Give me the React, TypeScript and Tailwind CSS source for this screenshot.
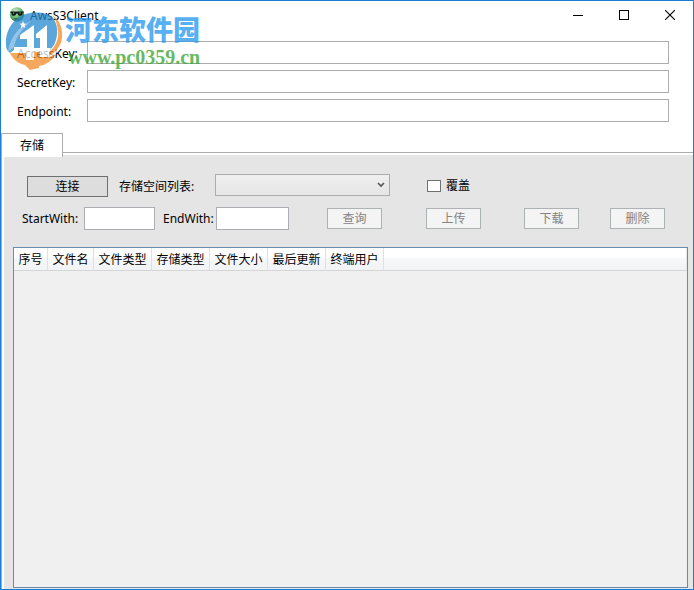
import React, { useState } from 'react';

const COLUMNS = [
  { title: '序号', width: 'w-[34px]' },
  { title: '文件名', width: 'w-[46px]' },
  { title: '文件类型', width: 'w-[58px]' },
  { title: '存储类型', width: 'w-[58px]' },
  { title: '文件大小', width: 'w-[58px]' },
  { title: '最后更新', width: 'w-[58px]' },
  { title: '终端用户', width: 'w-[58px]' },
];

const inputClass = 'h-[23px] min-w-0 border border-[#abadb3] bg-white px-1 outline-none';

const AppIcon: React.FC = () => (
  <svg width="16" height="16" viewBox="0 0 16 16" aria-hidden="true">
    <defs>
      <radialGradient id="face" cx="0.4" cy="0.3" r="0.75">
        <stop offset="0" stopColor="#d5f2d3" />
        <stop offset="0.5" stopColor="#71bd78" />
        <stop offset="1" stopColor="#1d6b38" />
      </radialGradient>
    </defs>
    <circle cx="8" cy="7.5" r="7.2" fill="url(#face)" />
    <path d="M1.500 4.500h13v1.200l-1 .5c0 1.800-1 2.600-2.400 2.600S9 8 8.500 6.400h-1C7 8 6 8.800 4.600 8.800S2.500 8 2.500 6.200l-1-.5z" fill="#101c16" />
    <path d="M4 6h1.200M10.500 6h1.200" stroke="#b8c8bd" strokeWidth="0.9" />
    <path d="M5.500 11.500c1.500.8 3.500.8 5-.3" stroke="#164c28" strokeWidth="0.9" fill="none" />
  </svg>
);

const SiteLogo: React.FC = () => (
  <svg width="60" height="60" viewBox="0 0 60 60" aria-hidden="true">
    <circle cx="29" cy="29" r="26" fill="#fff" />
    {/* sky */}
    <path d="M1 34C0 17 11 3 28 1.500C37 1 44 3 47 6C53 12 54 24 49 34L45 39H9L5 42C2 40 1 37 1 34z" fill="#2589ce" />
    <path d="M3 41C5 27 13 16 26 10C18 17 11 25 9 36z" fill="#fff" opacity="0.35" />
    <path d="M18 10l1 2.500 2.600.2-2 1.600.7 2.600-2.300-1.400-2.200 1.500.6-2.700-2-1.600 2.600-.2z" fill="#fff" />
    {/* towers */}
    <path d="M29 14V47H22V28H15V24z" fill="#fff" />
    <path d="M42 14V44H35V27H31V23z" fill="#fff" />
    <path d="M9 36H22V44H9z" fill="#fff" />
    <path d="M29 37H46L42 43H29z" fill="#fff" />
    {/* ground and right wing */}
    <path d="M47 4C55 9 58 18 57 27C56 35 51 41 44 45V41C50 36 54 29 53 20C52 13 51 8 47 4z" fill="#f28c28" />
    <path d="M5 42H21V49H29V41H35V46H44L51 43C47 50 41 54 34 55V57L25 59L20 54C12 52 8 48 5 42z" fill="#f28c28" />
  </svg>
);

const Watermark: React.FC = () => (
  <div className="pointer-events-none absolute left-[4px] top-[10px] z-20 flex opacity-75">
    <SiteLogo />
    <div className="flex flex-col whitespace-nowrap pt-[2px]">
      <span className="h-[31px] font-['Noto_Sans_CJK_SC',sans-serif] text-[27px] font-black leading-[31px] text-[#2196ee]">
        河东软件园
      </span>
      <span className="ml-[3px] font-['Liberation_Serif',serif] text-[20px] font-bold leading-[26px] text-[#35a32c]">
        www.pc0359.cn
      </span>
    </div>
  </div>
);

const TitleBar: React.FC = () => (
  <header className="flex h-[28px] items-center pl-2">
    <AppIcon />
    <h1 className="ml-[5px] flex-1 pt-px text-[12px]">AwsS3Client</h1>
    <button type="button" aria-label="最小化" className="flex h-full w-[46px] items-center justify-center">
      <svg width="10" height="10" shapeRendering="crispEdges">
        <path d="M0 5.500h10" stroke="#000" />
      </svg>
    </button>
    <button type="button" aria-label="最大化" className="flex h-full w-[46px] items-center justify-center">
      <svg width="10" height="10" shapeRendering="crispEdges">
        <rect x="0.5" y="0.5" width="9" height="9" fill="none" stroke="#000" />
      </svg>
    </button>
    <button type="button" aria-label="关闭" className="flex h-full w-[46px] items-center justify-center">
      <svg width="10" height="10">
        <path d="M0 0l10 10M10 0L0 10" stroke="#000" strokeWidth="1.1" />
      </svg>
    </button>
  </header>
);

interface KeyFieldProps {
  id: string;
  label: string;
}

const KeyField: React.FC<KeyFieldProps> = ({ id, label }) => (
  <div className="flex items-center">
    <label htmlFor={id} className="w-[70px] shrink-0 pt-[2px]">{label}</label>
    <input id={id} type="text" className={`${inputClass} flex-1`} />
  </div>
);

interface ActionButtonProps {
  label: string;
  className: string;
}

const ActionButton: React.FC<ActionButtonProps> = ({ label, className }) => (
  <button
    type="button"
    disabled
    className={`h-[21px] w-[55px] shrink-0 border border-[#adb2b5] bg-[#f4f4f4] leading-[19px] text-[#838383] ${className}`}
  >
    {label}
  </button>
);

const FileTable: React.FC = () => (
  <div className="flex-1 border border-[#688caf] bg-[#f0f0f0]">
    <table className="w-full table-fixed border-separate border-spacing-0">
      <thead>
        <tr className="h-[23px] bg-linear-to-b from-white from-40% via-[#f7f8fa] via-45% to-[#f1f2f4]">
          {COLUMNS.map((column) => (
            <th
              key={column.title}
              scope="col"
              className={`${column.width} whitespace-nowrap border-b border-r border-b-[#d5d5d5] border-r-[#dfe0e2] p-0 pt-px text-center font-normal`}
            >
              {column.title}
            </th>
          ))}
          <td className="border-b border-r border-b-[#d5d5d5] border-r-[#e4e5e7] p-0" />
        </tr>
      </thead>
      <tbody />
    </table>
  </div>
);

const StoragePanel: React.FC = () => {
  const [overwrite, setOverwrite] = useState(false);

  return (
    <section className="-mt-[5px] flex flex-1 flex-col border-l border-t border-[#acacac] bg-white pl-[2px] pt-[2px]">
      <div className="flex flex-1 flex-col bg-[#e5e5e5] pb-px pl-[9px] pr-[5px] pt-[19px]">
        <div className="flex h-[23px] items-end pl-[14px]">
          <button type="button" className="h-[21px] w-[81px] shrink-0 border border-[#707070] bg-[#dddddd] leading-[19px]">
            连接
          </button>
          <label htmlFor="bucket" className="ml-[11px] w-24 shrink-0 pb-[2px]">存储空间列表:</label>
          <div className="relative w-[175px] shrink-0 self-start">
            <select
              id="bucket"
              className="block h-[22px] w-full appearance-none border border-[#acacac] bg-linear-to-b from-[#f0f0f0] to-[#e5e5e5] px-1 outline-none"
            />
            <svg className="pointer-events-none absolute right-[5px] top-2" width="8" height="6" aria-hidden="true">
              <path d="M1 1l3 3l3-3" fill="none" stroke="#555" strokeWidth="1.6" />
            </svg>
          </div>
          <label className="ml-[37px] flex items-center gap-[5px] pb-[3px]">
            <input
              type="checkbox"
              checked={overwrite}
              onChange={(e) => setOverwrite(e.target.checked)}
              className="h-3 w-[14px] appearance-none border border-[#707070] bg-white checked:bg-[#707070]"
            />
            覆盖
          </label>
        </div>

        <div className="mt-[10px] flex items-center pl-[9px]">
          <label htmlFor="startWith" className="w-[62px] shrink-0">StartWith:</label>
          <input id="startWith" type="text" className={`${inputClass} w-[71px]`} />
          <label htmlFor="endWith" className="ml-2 w-[53px] shrink-0">EndWith:</label>
          <input id="endWith" type="text" className={`${inputClass} w-[73px]`} />
          <ActionButton label="查询" className="ml-[38px]" />
          <ActionButton label="上传" className="ml-[44px]" />
          <ActionButton label="下载" className="ml-[43px]" />
          <ActionButton label="删除" className="ml-[31px]" />
        </div>

        <div className="mt-[17px] flex flex-1 flex-col">
          <FileTable />
        </div>
      </div>
    </section>
  );
};

const App: React.FC = () => (
  <main className="relative flex min-h-screen flex-col border border-[#1a7fd4] bg-white font-['Noto_Sans','Noto_Sans_CJK_SC',sans-serif] text-[12px] leading-4 text-black">
    <TitleBar />

    <form className="mt-3 flex flex-col gap-[6px] pl-4 pr-6" onSubmit={(e) => e.preventDefault()}>
      <KeyField id="accessKey" label="AccessKey:" />
      <KeyField id="secretKey" label="SecretKey:" />
      <KeyField id="endpoint" label="Endpoint:" />
    </form>

    <div role="tablist" className="relative z-10 mt-[11px] flex">
      <button
        type="button"
        role="tab"
        aria-selected="true"
        className="h-6 w-[62px] border border-b-0 border-[#acacac] bg-white"
      >
        存储
      </button>
    </div>
    <StoragePanel />

    <Watermark />
  </main>
);

export default App;
